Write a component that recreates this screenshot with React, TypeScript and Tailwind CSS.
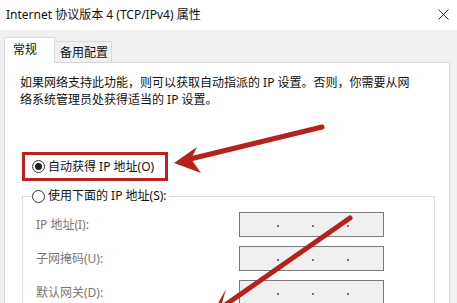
import React from "react";

const FONT = "font-['Noto_Sans','Noto_Sans_CJK_SC',sans-serif]";

const Radio = ({ checked }: { checked?: boolean }) => (
  <span className="flex h-[13px] w-[13px] shrink-0 items-center justify-center rounded-full border border-[#333] bg-white">
    {checked && <span className="h-[7px] w-[7px] rounded-full bg-[#222]" />}
  </span>
);

const IpField = () => (
  <div className="flex h-[25px] w-[145px] items-center gap-[33px] border border-[#7a7a7a] bg-[#f0f0f0] pl-[37px] pt-[3px]">
    <span className="h-[2px] w-[2px] bg-[#777]" />
    <span className="h-[2px] w-[2px] bg-[#777]" />
    <span className="h-[2px] w-[2px] bg-[#777]" />
  </div>
);

const rows = ["IP 地址(I):", "子网掩码(U):", "默认网关(D):"];

export default function App() {
  return (
    <div className={`relative flex h-[303px] w-[457px] flex-col overflow-hidden bg-[#f0f0f0] text-[12px] text-[#111] ${FONT}`}>
      {/* title bar */}
      <div className="flex h-[30px] shrink-0 items-center justify-between bg-white pl-[6px] pr-[8px]">
        <span className="leading-[16px] text-[#111]">Internet 协议版本 4 (TCP/IPv4) 属性</span>
        <svg width="11" height="11" viewBox="0 0 11 11" className="mb-[1px]">
          <path d="M0.5 0.5 L10.5 10.5 M10.5 0.5 L0.5 10.5" stroke="#333" strokeWidth="1" />
        </svg>
      </div>

      {/* dialog body */}
      <div className="flex flex-1 flex-col pl-[4px] pr-[7px] pt-[7px]">
        <div className="flex items-end">
          <div className="relative z-10 -mb-px h-[26px] w-[51px] border border-b-0 border-[#d9d9d9] bg-white pl-[8px] pt-[4px] leading-[16px]">
            常规
          </div>
          <div className="h-[21px] w-[57px] border border-b-0 border-l-0 border-[#d9d9d9] pl-[5px] pt-[3px] leading-[16px]">
            备用配置
          </div>
        </div>

        <div className="flex-1 border border-[#d9d9d9] bg-white pl-[15px] pt-[11px]">
          <p className="w-[400px] leading-[17px]">
            如果网络支持此功能，则可以获取自动指派的 IP 设置。否则，你需要从网络系统管理员处获得适当的 IP 设置。
          </p>

          <div className="ml-[2px] mt-[44px] flex h-[29px] w-[146px] items-center gap-[3px] border-[3px] border-[#b8231f] pl-[7px]">
            <Radio checked />
            <span className="leading-[16px]">自动获得 IP 地址(O)</span>
          </div>

          <fieldset className="ml-[2px] mt-[7px] w-[413px] border border-[#dcdcdc] pb-[10px] pl-[13px]">
            <legend className="-ml-[4px] flex items-center gap-[3px] bg-white pr-[2px] leading-[16px]">
              <Radio />
              <span>使用下面的 IP 地址(S):</span>
            </legend>
            <div className="mt-[8px] flex flex-col gap-[9px]">
              {rows.map((label) => (
                <div key={label} className="flex items-center">
                  <span className="w-[203px] leading-[16px] text-[#777]">{label}</span>
                  <IpField />
                </div>
              ))}
            </div>
          </fieldset>
        </div>
      </div>

      {/* annotation arrows */}
      <svg className="pointer-events-none absolute left-0 top-0" width="457" height="303" viewBox="0 0 457 303">
        <line x1="322" y1="127" x2="190" y2="159" stroke="#b5221b" strokeWidth="5" strokeLinecap="round" />
        <polygon points="174,163 197,147 191,159 201,173" fill="#b5221b" />
        <line x1="350" y1="218" x2="218" y2="310" stroke="#b5221b" strokeWidth="5" strokeLinecap="round" />
        <polygon points="212,314 226,289 222,303 240,308" fill="#b5221b" />
      </svg>
    </div>
  );
}
